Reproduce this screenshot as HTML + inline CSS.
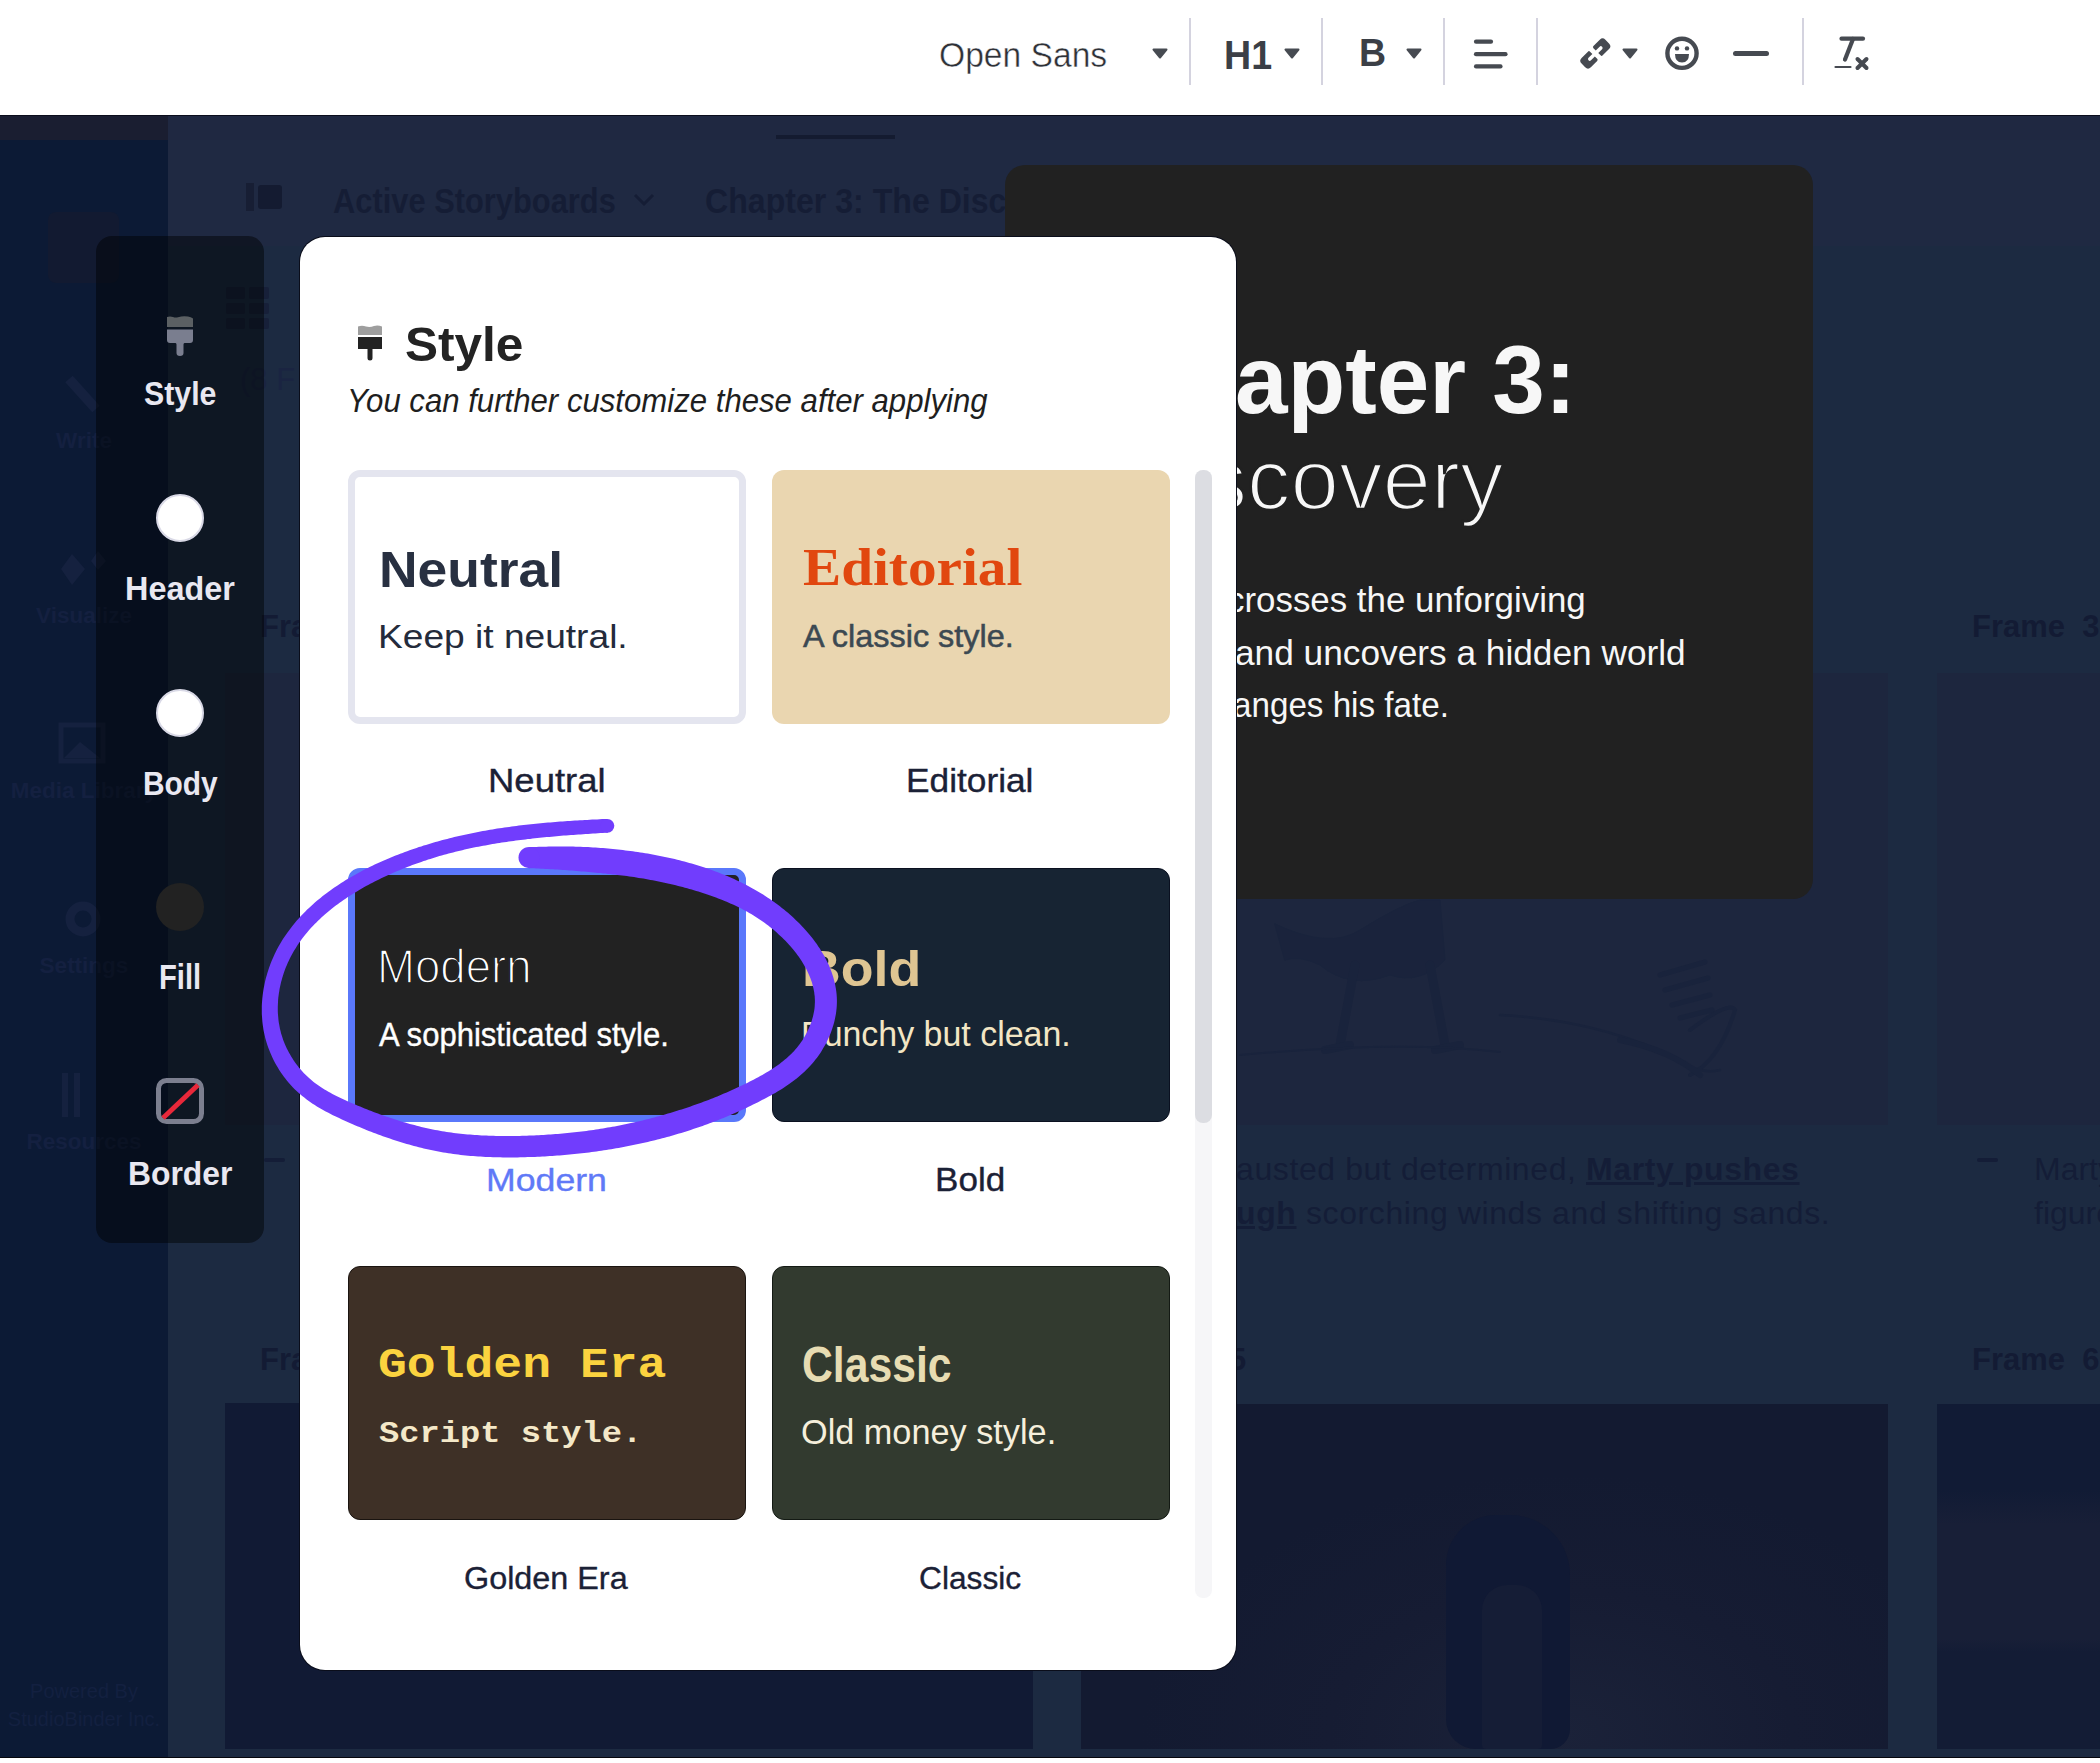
<!DOCTYPE html>
<html><head><meta charset="utf-8">
<style>
*{margin:0;padding:0;box-sizing:border-box}
html,body{width:2100px;height:1763px;overflow:hidden;background:#1c2a41;font-family:"Liberation Sans",sans-serif}
.a{position:absolute}
.t{position:absolute;white-space:nowrap;line-height:1;transform-origin:0 0}
.sep{position:absolute;top:18px;width:2px;height:67px;background:#d4d3df}
.car{position:absolute}
</style></head><body>
<div class="a" style="left:0;top:116px;width:2100px;height:1647px;background:#1c2a41"></div>
<div class="a" style="left:168px;top:116px;width:1932px;height:130px;background:#1f2942"></div>
<div class="a" style="left:0;top:116px;width:168px;height:1647px;background:#0c1a35"></div>
<div class="a" style="left:0;top:116px;width:168px;height:24px;background:#1a1e31"></div>
<div class="a" style="left:168px;top:116px;width:1932px;height:24px;background:#1f2841"></div>
<div class="a" style="left:776px;top:135px;width:119px;height:4px;background:#141b30"></div>
<div class="t" style="left:333.10px;top:183.50px;font-family:'Liberation Sans',sans-serif;font-size:34.25px;transform:scaleX(0.9006);font-weight:bold;color:#151d35;">Active Storyboards</div>
<svg class="a" style="left:632px;top:192px" width="24" height="16"><path d="M3 3 L12 12 L21 3" stroke="#151d35" stroke-width="3" fill="none"/></svg>
<div class="t" style="left:705.06px;top:183.50px;font-family:'Liberation Sans',sans-serif;font-size:34.25px;transform:scaleX(0.9373);font-weight:bold;color:#151d35;">Chapter 3: The Disc</div>
<div class="a" style="left:258px;top:185px;width:24px;height:24px;background:#141b31;border-radius:3px"></div>
<div class="a" style="left:246px;top:183px;width:8px;height:28px;background:#171e34"></div>
<div class="a" style="left:48px;top:212px;width:71px;height:71px;background:#121a31;border-radius:8px"></div>
<div class="a" style="left:226.0px;top:287.3px;width:18.6px;height:11.3px;background:#172039;border-radius:2px"></div>
<div class="a" style="left:249.3px;top:287.3px;width:19.3px;height:11.3px;background:#172039;border-radius:2px"></div>
<div class="a" style="left:226.0px;top:302.7px;width:18.6px;height:11.3px;background:#172039;border-radius:2px"></div>
<div class="a" style="left:249.3px;top:302.7px;width:19.3px;height:11.3px;background:#172039;border-radius:2px"></div>
<div class="a" style="left:226.0px;top:318.1px;width:18.6px;height:11.3px;background:#172039;border-radius:2px"></div>
<div class="a" style="left:249.3px;top:318.1px;width:19.3px;height:11.3px;background:#172039;border-radius:2px"></div>
<div class="t" style="left:240px;top:364px;font-size:31px;color:#1a2441">(8 F</div>
<div class="t" style="left:0;width:168px;text-align:center;top:430.4px;font-size:22.5px;font-weight:bold;color:#142040">Write</div>
<div class="t" style="left:0;width:168px;text-align:center;top:605.0px;font-size:22.5px;font-weight:bold;color:#142040">Visualize</div>
<div class="t" style="left:0;width:168px;text-align:center;top:780.0px;font-size:22.5px;font-weight:bold;color:#142040">Media Library</div>
<div class="t" style="left:0;width:168px;text-align:center;top:955.3px;font-size:22.5px;font-weight:bold;color:#142040">Settings</div>
<div class="t" style="left:0;width:168px;text-align:center;top:1130.8px;font-size:22.5px;font-weight:bold;color:#142040">Resources</div>
<svg class="a" style="left:60px;top:372px" width="44" height="44"><line x1="9" y1="7" x2="36" y2="37" stroke="#15213f" stroke-width="10"/></svg>
<svg class="a" style="left:58px;top:548px" width="52" height="42"><path d="M3 21 L14 6 L27 21 L14 37 Z" fill="#15213f"/><path d="M33 13 L40 3 L48 13 L40 22 Z" fill="#15213f"/></svg>
<svg class="a" style="left:58px;top:722px" width="48" height="42"><rect x="3" y="3" width="42" height="36" fill="none" stroke="#15213f" stroke-width="5"/><path d="M6 36 L22 20 L42 36 Z" fill="#15213f"/></svg>
<svg class="a" style="left:64px;top:900px" width="38" height="38"><circle cx="19" cy="19" r="13" fill="none" stroke="#15213f" stroke-width="9"/></svg>
<svg class="a" style="left:60px;top:1072px" width="44" height="46"><rect x="2" y="1" width="6" height="44" fill="#15213f"/><rect x="14" y="1" width="6" height="44" fill="#15213f"/></svg>
<div class="t" style="left:0;width:168px;text-align:center;top:1681px;font-size:20px;color:#132040">Powered By</div>
<div class="t" style="left:0;width:168px;text-align:center;top:1709px;font-size:20px;color:#132040">StudioBinder Inc.</div>
<div class="t" style="left:260px;top:611px;font-size:31px;font-weight:bold;color:#131b34">Fra</div>
<div class="t" style="left:260px;top:1344px;font-size:31px;font-weight:bold;color:#131b34">Fra</div>
<div class="t" style="left:1972px;top:611px;font-size:31px;font-weight:bold;color:#131b34">Frame&nbsp; 3</div>
<div class="t" style="left:1972px;top:1344px;font-size:31px;font-weight:bold;color:#131b34">Frame&nbsp; 6</div>
<div class="t" style="left:1229px;top:1344px;font-size:31px;font-weight:bold;color:#131b34">5</div>
<div class="a" style="left:225px;top:673px;width:808px;height:452px;background:#1d263e"></div>
<div class="a" style="left:1081px;top:673px;width:807px;height:452px;background:#1d263e"></div>
<div class="a" style="left:1937px;top:673px;width:163px;height:452px;background:#1d263e"></div>
<div class="a" style="left:225px;top:1403px;width:808px;height:346px;background:#111a34"></div>
<svg class="a" style="left:1081px;top:673px" width="807" height="452" viewBox="1081 673 807 452">
<g fill="#19233c" stroke="#19233c" stroke-linecap="round" fill-opacity="0.75">
<path d="M1275 924 Q1330 950 1360 930 Q1400 905 1420 900 L1440 900 L1445 960 Q1420 985 1390 975 Q1350 990 1320 965 Q1300 955 1285 960 Z"/>
<path d="M1355 965 L1340 1045 M1430 965 L1445 1045" stroke-width="9" fill="none"/>
<path d="M1325 1050 L1350 1045 M1435 1050 L1460 1045" stroke-width="8" fill="none"/>
<path d="M1240 1055 Q1400 1040 1500 1052" stroke-width="2" fill="none"/>
<path d="M1500 1015 Q1600 1020 1680 1060 Q1700 1075 1720 1070" stroke-width="2.5" fill="none"/>
<path d="M1660 975 L1705 962 M1665 990 L1708 978 M1672 1005 L1710 995 M1680 1018 L1712 1010" stroke-width="5" fill="none"/>
<path d="M1690 1030 Q1730 1000 1735 1010 Q1720 1060 1690 1075" stroke-width="4" fill="none"/>
<path d="M1620 1040 Q1670 1050 1700 1075" stroke-width="6" fill="none"/>
</g></svg>
<div class="a" style="left:1081px;top:1404px;width:807px;height:345px;background:radial-gradient(ellipse 420px 260px at 480px 330px,#1b2239 0%,#161c33 55%,#131a31 100%)"></div>
<div class="a" style="left:1446px;top:1515px;width:124px;height:234px;background:#101934;border-radius:50px 60px 20px 30px"></div>
<div class="a" style="left:1482px;top:1585px;width:60px;height:164px;background:#151d36;border-radius:25px 25px 4px 4px"></div>
<div class="a" style="left:1937px;top:1404px;width:163px;height:345px;background:linear-gradient(#111b35 0%,#111b35 25%,#181f37 35%,#181f37 68%,#131c35 72%)"></div>
<div class="t" style="left:1236px;top:1153px;font-size:32px;color:#141d37;letter-spacing:0.6px">austed but determined, <b style="text-decoration:underline">Marty pushes </b></div>
<div class="t" style="left:1236px;top:1197px;font-size:32px;color:#141d37;letter-spacing:0.6px"><b style="text-decoration:underline">ugh</b> scorching winds and shifting sands.</div>
<div class="t" style="left:2034px;top:1153px;font-size:32px;color:#141d37">Marty</div>
<div class="t" style="left:2034px;top:1197px;font-size:32px;color:#141d37">figure</div>
<div class="a" style="left:1977px;top:1158px;width:21px;height:4px;background:#141d37;border-radius:2px"></div>
<div class="a" style="left:264px;top:1158px;width:21px;height:4px;background:#141d37;border-radius:2px"></div>
<div class="a" style="left:1005px;top:165px;width:808px;height:734px;background:#212121;border-radius:20px"></div>
<div class="t" style="left:1235.07px;top:332.30px;font-family:'Liberation Sans',sans-serif;font-size:96.86px;transform:scaleX(0.9751);font-weight:bold;color:#f7f7f7;"><span style="position:absolute;right:100%">Ch</span>apter 3:</div>
<div class="t" style="left:1246.88px;top:437.60px;font-family:'Liberation Sans',sans-serif;font-size:84.44px;transform:scaleX(1.0311);;color:#f7f7f7;font-weight:normal;-webkit-text-stroke:2.5px #212121"><span style="position:absolute;right:100%">Dis</span>covery</div>
<div class="t" style="left:1227.04px;top:583.00px;font-family:'Liberation Sans',sans-serif;font-size:35.62px;transform:scaleX(0.9796);;color:#f7f7f7;"><span style="position:absolute;right:100%">Marty </span>crosses the unforgiving</div>
<div class="t" style="left:1235.00px;top:634.50px;font-family:'Liberation Sans',sans-serif;font-size:35.21px;transform:scaleX(1.0013);;color:#f7f7f7;"><span style="position:absolute;right:100%">desert </span>and uncovers a hidden world</div>
<div class="t" style="left:1233.07px;top:688.00px;font-family:'Liberation Sans',sans-serif;font-size:34.38px;transform:scaleX(0.9656);;color:#f7f7f7;"><span style="position:absolute;right:100%">that ch</span>anges his fate.</div>
<div class="a" style="left:96px;top:236px;width:168px;height:1007px;background:rgba(1,2,3,0.47);border-radius:16px"></div>
<svg class="a" style="left:166px;top:315px" width="28" height="42" viewBox="0 0 28 42">
<path d="M1 2 Q4 1 7 2 Q9.5 3 12 2.2 Q17 0.5 22 1.5 Q25 2 27 3.5 L27 12 L1 12 Z" fill="#5b6063"/>
<path d="M1 14.5 L27 14.5 L27 25 Q27 28 24 28 L18.5 28 Q17.5 28 17.5 29.5 L17.5 38 Q17.5 41 14 41 Q10.5 41 10.5 38 L10.5 29.5 Q10.5 28 9.5 28 L4 28 Q1 28 1 25 Z" fill="#7a7e8f"/>
</svg>
<div class="t" style="left:143.77px;top:378.00px;font-family:'Liberation Sans',sans-serif;font-size:32.47px;transform:scaleX(0.9333);font-weight:bold;color:#e9e8f1;">Style</div>
<div class="a" style="left:156px;top:494px;width:48px;height:48px;border-radius:50%;background:#fff;border:2px solid #d9d9e6"></div>
<div class="t" style="left:125.01px;top:572.70px;font-family:'Liberation Sans',sans-serif;font-size:32.47px;transform:scaleX(0.9972);font-weight:bold;color:#e9e8f1;">Header</div>
<div class="a" style="left:156px;top:689px;width:48px;height:48px;border-radius:50%;background:#fff;border:2px solid #d9d9e6"></div>
<div class="t" style="left:143.18px;top:767.70px;font-family:'Liberation Sans',sans-serif;font-size:32.88px;transform:scaleX(0.9087);font-weight:bold;color:#e9e8f1;">Body</div>
<div class="a" style="left:156px;top:883px;width:48px;height:48px;border-radius:50%;background:#222222"></div>
<div class="t" style="left:159.30px;top:960.30px;font-family:'Liberation Sans',sans-serif;font-size:34.25px;transform:scaleX(0.8511);font-weight:bold;color:#e9e8f1;">Fill</div>
<svg class="a" style="left:155px;top:1077px" width="50" height="48" viewBox="0 0 50 48">
<rect x="3.5" y="3.5" width="43" height="41" rx="8" fill="none" stroke="#7c7f8f" stroke-width="5"/>
<line x1="8" y1="41" x2="43" y2="8" stroke="#e8283a" stroke-width="5"/>
</svg>
<div class="t" style="left:128.06px;top:1157.70px;font-family:'Liberation Sans',sans-serif;font-size:32.88px;transform:scaleX(0.9686);font-weight:bold;color:#e9e8f1;">Border</div>
<div class="a" style="left:299px;top:236px;width:938px;height:1435px;background:#0a0d1a;border-radius:26px"></div>
<div class="a" style="left:300px;top:237px;width:936px;height:1433px;background:#fff;border-radius:25px"></div>
<svg class="a" style="left:357px;top:325px" width="26" height="36" viewBox="0 0 26 36">
<path d="M1 1.5 Q5 0 9 1.5 Q13 2.5 17 1 Q21 0 25 1.5 L25 10 L1 10 Z" fill="#9e9e9e"/>
<path d="M1 12 L25 12 L25 24 L15.5 24 L15.5 33 Q15.5 35.5 13 35.5 Q10.5 35.5 10.5 33 L10.5 24 L1 24 Z" fill="#222"/>
</svg>
<div class="t" style="left:404.65px;top:320.00px;font-family:'Liberation Sans',sans-serif;font-size:48.36px;transform:scaleX(1.0241);font-weight:bold;color:#232323;">Style</div>
<div class="t" style="left:347.15px;top:384.60px;font-family:'Liberation Sans',sans-serif;font-size:32.33px;transform:scaleX(0.9634);font-style:italic;color:#1e1e20;">You can further customize these after applying</div>
<div class="a" style="left:348px;top:470px;width:398px;height:254px;background:#fff;border-radius:12px;border:7px solid #e4e5ef"></div>
<div class="a" style="left:772px;top:470px;width:398px;height:254px;background:#ead6b0;border-radius:12px;"></div>
<div class="a" style="left:348px;top:868px;width:398px;height:254px;background:#222222;border-radius:12px;border:7px solid #5a78fb"></div>
<div class="a" style="left:772px;top:868px;width:398px;height:254px;background:#172433;border-radius:12px;border:1px solid #0a1020"></div>
<div class="a" style="left:348px;top:1266px;width:398px;height:254px;background:#3e3026;border-radius:12px;border:1px solid #1a1410"></div>
<div class="a" style="left:772px;top:1266px;width:398px;height:254px;background:#323a2f;border-radius:12px;border:1px solid #141a14"></div>
<div class="t" style="left:379.48px;top:545.70px;font-family:'Liberation Sans',sans-serif;font-size:49.73px;transform:scaleX(1.0745);font-weight:bold;color:#283041;">Neutral</div>
<div class="t" style="left:378.41px;top:620.00px;font-family:'Liberation Sans',sans-serif;font-size:33.84px;transform:scaleX(1.0973);;color:#242b3b;">Keep it neutral.</div>
<div class="t" style="left:802.92px;top:540.70px;font-family:'Liberation Serif',serif;font-size:52.75px;transform:scaleX(1.0845);font-weight:bold;color:#e1470f;">Editorial</div>
<div class="t" style="left:802.90px;top:620.90px;font-family:'Liberation Sans',sans-serif;font-size:31.37px;transform:scaleX(1.0338);;color:#3c4952;-webkit-text-stroke:0.5px #3c4952">A classic style.</div>
<div class="t" style="left:376.75px;top:943.10px;font-family:'Liberation Sans',sans-serif;font-size:47.4px;transform:scaleX(0.9617);;color:#ffffff;-webkit-text-stroke:1.6px #222222">Modern</div>
<div class="t" style="left:378.90px;top:1017.90px;font-family:'Liberation Sans',sans-serif;font-size:33.42px;transform:scaleX(0.9291);;color:#ffffff;-webkit-text-stroke:0.4px #ffffff">A sophisticated style.</div>
<div class="t" style="left:801.59px;top:943.80px;font-family:'Liberation Sans',sans-serif;font-size:50.14px;transform:scaleX(1.0714);font-weight:bold;color:#dfc592;">Bold</div>
<div class="t" style="left:801.04px;top:1016.90px;font-family:'Liberation Sans',sans-serif;font-size:34.38px;transform:scaleX(0.9869);;color:#f3e6c4;">Punchy but clean.</div>
<div class="t" style="left:377.74px;top:1345.20px;font-family:'Liberation Mono',monospace;font-size:42.47px;transform:scaleX(1.1317);font-weight:bold;color:#fbd33f;">Golden Era</div>
<div class="t" style="left:378.89px;top:1418.50px;font-family:'Liberation Mono',monospace;font-size:30.41px;transform:scaleX(1.1100);font-weight:bold;color:#f4e8c8;">Script style.</div>
<div class="t" style="left:802.31px;top:1340.40px;font-family:'Liberation Sans',sans-serif;font-size:50.55px;transform:scaleX(0.8451);font-weight:bold;color:#e7dcb2;">Classic</div>
<div class="t" style="left:801.36px;top:1414.40px;font-family:'Liberation Sans',sans-serif;font-size:35.34px;transform:scaleX(0.9698);;color:#f6efdc;">Old money style.</div>
<div class="t" style="left:487.51px;top:765.20px;font-family:'Liberation Sans',sans-serif;font-size:32.33px;transform:scaleX(1.1293);;color:#1b2136;;-webkit-text-stroke:0.35px #1b2136">Neutral</div>
<div class="t" style="left:906.13px;top:765.20px;font-family:'Liberation Sans',sans-serif;font-size:32.33px;transform:scaleX(1.0911);;color:#1b2136;;-webkit-text-stroke:0.35px #1b2136">Editorial</div>
<div class="t" style="left:486.19px;top:1164.90px;font-family:'Liberation Sans',sans-serif;font-size:31.37px;transform:scaleX(1.1376);;color:#6079f7;;-webkit-text-stroke:0.35px #6079f7">Modern</div>
<div class="t" style="left:935.28px;top:1163.90px;font-family:'Liberation Sans',sans-serif;font-size:32.74px;transform:scaleX(1.0717);;color:#1b2136;;-webkit-text-stroke:0.35px #1b2136">Bold</div>
<div class="t" style="left:463.98px;top:1561.80px;font-family:'Liberation Sans',sans-serif;font-size:32.05px;transform:scaleX(1.0094);;color:#1b2136;;-webkit-text-stroke:0.35px #1b2136">Golden Era</div>
<div class="t" style="left:919.32px;top:1561.80px;font-family:'Liberation Sans',sans-serif;font-size:32.05px;transform:scaleX(0.9890);;color:#1b2136;;-webkit-text-stroke:0.35px #1b2136">Classic</div>
<div class="a" style="left:1195px;top:470px;width:17px;height:1128px;background:#f6f6f8;border-radius:8px"></div>
<div class="a" style="left:1195px;top:470px;width:17px;height:653px;background:#dcdde2;border-radius:8px"></div>
<svg class="a" style="left:0;top:0" width="2100" height="1763"><g fill="#713dfd"><path d="M607.1,818.9 L604.6,819.0 L602.1,819.1 L599.6,819.3 L597.1,819.4 L594.7,819.5 L592.2,819.6 L589.7,819.8 L587.2,819.9 L584.8,820.0 L582.3,820.2 L579.8,820.3 L577.4,820.5 L574.9,820.6 L572.4,820.8 L570.0,820.9 L567.5,821.1 L565.1,821.2 L562.6,821.4 L560.2,821.6 L557.7,821.8 L555.3,822.0 L552.8,822.2 L550.4,822.4 L548.0,822.6 L545.5,822.8 L543.1,823.0 L540.7,823.2 L538.2,823.5 L535.8,823.7 L533.4,824.0 L530.9,824.2 L528.5,824.5 L526.1,824.7 L523.7,825.0 L521.3,825.3 L518.8,825.6 L516.4,825.9 L514.0,826.2 L511.6,826.5 L509.2,826.9 L506.8,827.2 L504.4,827.6 L502.0,827.9 L499.6,828.3 L497.2,828.6 L494.8,829.0 L492.4,829.4 L490.0,829.8 L487.6,830.2 L485.2,830.7 L482.8,831.1 L480.4,831.5 L478.1,832.0 L475.7,832.5 L473.3,832.9 L470.9,833.4 L468.5,833.9 L466.1,834.4 L463.8,834.9 L461.4,835.5 L459.0,836.0 L456.7,836.6 L454.3,837.1 L451.9,837.7 L449.6,838.3 L447.2,838.9 L444.8,839.5 L442.5,840.1 L440.1,840.8 L437.7,841.4 L435.4,842.1 L433.0,842.8 L430.7,843.5 L428.3,844.2 L426.0,844.9 L423.6,845.6 L421.3,846.4 L418.9,847.1 L416.6,847.9 L414.2,848.7 L411.9,849.5 L409.6,850.3 L407.2,851.2 L404.9,852.0 L402.6,852.9 L400.2,853.8 L397.9,854.7 L395.6,855.6 L393.2,856.5 L390.9,857.5 L388.6,858.5 L386.2,859.4 L383.9,860.4 L381.6,861.5 L379.3,862.5 L377.0,863.6 L374.7,864.6 L372.4,865.7 L370.1,866.8 L367.8,868.0 L365.5,869.1 L363.2,870.3 L361.0,871.5 L358.7,872.7 L356.5,873.9 L354.3,875.2 L352.0,876.4 L349.8,877.7 L347.6,879.0 L345.4,880.3 L343.3,881.7 L341.1,883.1 L339.0,884.5 L336.8,885.9 L334.7,887.3 L332.6,888.7 L330.6,890.2 L328.5,891.7 L326.5,893.2 L324.4,894.8 L322.4,896.3 L320.5,897.9 L318.5,899.5 L316.6,901.1 L314.6,902.8 L312.8,904.5 L310.9,906.2 L309.0,907.9 L307.2,909.6 L305.4,911.4 L303.6,913.2 L301.9,915.0 L300.2,916.8 L298.5,918.7 L296.8,920.6 L295.2,922.5 L293.6,924.4 L292.0,926.4 L290.5,928.4 L289.0,930.4 L287.5,932.4 L286.1,934.5 L284.7,936.5 L283.3,938.6 L281.9,940.8 L280.6,942.9 L279.4,945.1 L278.1,947.3 L276.9,949.6 L275.8,951.8 L274.7,954.1 L273.6,956.4 L272.6,958.7 L271.6,961.1 L270.6,963.5 L269.7,965.9 L268.9,968.3 L268.1,970.7 L267.3,973.2 L266.6,975.7 L265.9,978.1 L265.3,980.6 L264.7,983.2 L264.2,985.7 L263.7,988.2 L263.3,990.8 L262.9,993.4 L262.6,995.9 L262.3,998.5 L262.1,1001.1 L261.9,1003.7 L261.8,1006.3 L261.8,1008.9 L261.8,1011.5 L261.8,1014.1 L262.0,1016.8 L262.2,1019.4 L262.4,1022.0 L262.7,1024.6 L263.1,1027.2 L263.5,1029.9 L264.0,1032.5 L264.6,1035.1 L265.2,1037.7 L265.9,1040.3 L266.7,1042.9 L267.5,1045.4 L268.4,1048.0 L269.4,1050.5 L270.4,1053.0 L271.5,1055.5 L272.6,1058.0 L273.8,1060.4 L275.1,1062.9 L276.4,1065.2 L277.8,1067.6 L279.2,1069.9 L280.7,1072.2 L282.3,1074.4 L283.9,1076.7 L285.5,1078.8 L287.2,1080.9 L288.9,1083.0 L290.7,1085.0 L292.5,1087.0 L294.4,1088.9 L296.3,1090.8 L298.2,1092.6 L300.2,1094.3 L302.2,1096.0 L304.3,1097.6 L306.3,1099.2 L308.4,1100.7 L310.5,1102.2 L312.6,1103.7 L314.8,1105.1 L316.9,1106.4 L319.1,1107.7 L321.3,1109.0 L323.5,1110.2 L325.7,1111.4 L327.9,1112.6 L330.2,1113.8 L332.4,1114.9 L334.6,1116.0 L336.9,1117.1 L339.1,1118.1 L341.4,1119.2 L343.6,1120.2 L345.9,1121.2 L348.1,1122.2 L350.4,1123.2 L352.7,1124.2 L354.9,1125.2 L357.2,1126.2 L359.5,1127.1 L361.8,1128.1 L364.1,1129.0 L366.4,1130.0 L368.8,1130.9 L371.1,1131.8 L373.4,1132.7 L375.8,1133.6 L378.1,1134.5 L380.5,1135.3 L382.8,1136.2 L385.2,1137.0 L387.5,1137.8 L389.9,1138.6 L392.3,1139.4 L394.7,1140.2 L397.1,1141.0 L399.5,1141.7 L401.9,1142.5 L404.3,1143.2 L406.7,1143.9 L409.1,1144.6 L411.5,1145.2 L413.9,1145.9 L416.4,1146.5 L418.8,1147.2 L421.2,1147.8 L423.7,1148.4 L426.1,1148.9 L428.6,1149.5 L431.0,1150.0 L433.5,1150.6 L435.9,1151.1 L438.4,1151.5 L440.9,1152.0 L443.3,1152.4 L445.8,1152.8 L448.3,1153.2 L450.8,1153.6 L453.3,1154.0 L455.7,1154.3 L458.2,1154.6 L460.7,1154.9 L463.2,1155.2 L465.7,1155.5 L468.1,1155.7 L470.6,1155.9 L473.1,1156.1 L475.6,1156.3 L478.1,1156.5 L480.5,1156.6 L483.0,1156.8 L485.5,1156.9 L488.0,1157.0 L490.5,1157.1 L492.9,1157.2 L495.4,1157.2 L497.9,1157.3 L500.3,1157.3 L502.8,1157.4 L505.3,1157.4 L507.7,1157.4 L510.2,1157.4 L512.7,1157.4 L515.1,1157.4 L517.6,1157.4 L520.1,1157.3 L522.6,1157.3 L525.0,1157.2 L527.5,1157.1 L530.0,1157.1 L532.4,1157.0 L534.9,1156.9 L537.4,1156.8 L539.8,1156.7 L542.3,1156.5 L544.8,1156.4 L547.2,1156.3 L549.7,1156.1 L552.2,1156.0 L554.7,1155.8 L557.1,1155.6 L559.6,1155.4 L562.1,1155.2 L564.5,1155.0 L567.0,1154.8 L569.5,1154.6 L571.9,1154.3 L574.4,1154.1 L576.9,1153.8 L579.3,1153.5 L581.8,1153.3 L584.2,1153.0 L586.7,1152.7 L589.2,1152.4 L591.6,1152.1 L594.1,1151.7 L596.5,1151.4 L599.0,1151.0 L601.4,1150.7 L603.9,1150.3 L606.3,1149.9 L608.8,1149.6 L611.2,1149.2 L613.7,1148.7 L616.1,1148.3 L618.6,1147.9 L621.0,1147.5 L623.5,1147.0 L625.9,1146.5 L628.3,1146.1 L630.8,1145.6 L633.2,1145.1 L635.6,1144.6 L638.1,1144.1 L640.5,1143.6 L642.9,1143.0 L645.3,1142.5 L647.8,1141.9 L650.2,1141.3 L652.6,1140.8 L655.0,1140.2 L657.4,1139.6 L659.8,1139.0 L662.2,1138.3 L664.6,1137.7 L667.0,1137.1 L669.4,1136.4 L671.8,1135.7 L674.2,1135.0 L676.6,1134.3 L679.0,1133.6 L681.3,1132.9 L683.7,1132.2 L686.1,1131.4 L688.4,1130.7 L690.8,1129.9 L693.2,1129.1 L695.5,1128.3 L697.9,1127.5 L700.2,1126.7 L702.6,1125.9 L704.9,1125.1 L707.3,1124.2 L709.6,1123.3 L711.9,1122.5 L714.2,1121.6 L716.6,1120.7 L718.9,1119.8 L721.2,1118.8 L723.5,1117.9 L725.8,1116.9 L728.1,1116.0 L730.4,1115.0 L732.7,1114.0 L735.0,1113.0 L737.2,1112.0 L739.5,1111.0 L741.8,1110.0 L744.0,1108.9 L746.3,1107.9 L748.6,1106.8 L750.8,1105.7 L753.1,1104.6 L755.3,1103.5 L757.5,1102.4 L759.8,1101.3 L762.0,1100.1 L764.2,1099.0 L766.5,1097.8 L768.7,1096.6 L770.9,1095.4 L773.1,1094.1 L775.3,1092.9 L777.5,1091.6 L779.7,1090.2 L781.9,1088.9 L784.1,1087.5 L786.2,1086.1 L788.4,1084.6 L790.5,1083.1 L792.6,1081.6 L794.6,1080.0 L796.7,1078.4 L798.7,1076.7 L800.7,1075.0 L802.7,1073.3 L804.7,1071.5 L806.6,1069.6 L808.4,1067.7 L810.3,1065.8 L812.1,1063.8 L813.8,1061.7 L815.5,1059.6 L817.2,1057.4 L818.8,1055.2 L820.4,1052.9 L821.9,1050.5 L823.3,1048.1 L824.7,1045.7 L826.1,1043.2 L827.3,1040.7 L828.5,1038.1 L829.7,1035.6 L830.7,1032.9 L831.7,1030.3 L832.6,1027.6 L833.4,1024.9 L834.2,1022.2 L834.8,1019.4 L835.4,1016.6 L835.9,1013.9 L836.3,1011.0 L836.6,1008.2 L836.8,1005.4 L836.9,1002.6 L836.9,999.8 L836.8,997.0 L836.6,994.2 L836.3,991.5 L835.9,988.8 L835.4,986.0 L834.9,983.4 L834.2,980.7 L833.5,978.1 L832.7,975.5 L831.9,972.9 L830.9,970.3 L829.9,967.8 L828.9,965.3 L827.7,962.8 L826.5,960.4 L825.3,958.0 L824.0,955.6 L822.6,953.2 L821.2,950.9 L819.8,948.6 L818.3,946.4 L816.8,944.1 L815.2,941.9 L813.6,939.8 L811.9,937.6 L810.2,935.5 L808.5,933.5 L806.8,931.4 L805.0,929.4 L803.2,927.4 L801.3,925.5 L799.5,923.6 L797.6,921.7 L795.7,919.9 L793.8,918.1 L791.9,916.3 L789.9,914.5 L788.0,912.8 L786.0,911.2 L784.0,909.5 L781.9,907.9 L779.9,906.3 L777.9,904.8 L775.8,903.2 L773.7,901.7 L771.6,900.3 L769.5,898.8 L767.4,897.4 L765.2,896.0 L763.1,894.6 L760.9,893.3 L758.7,892.0 L756.6,890.7 L754.4,889.4 L752.1,888.2 L749.9,887.0 L747.7,885.8 L745.5,884.6 L743.2,883.5 L740.9,882.3 L738.7,881.2 L736.4,880.2 L734.1,879.1 L731.8,878.1 L729.5,877.1 L727.2,876.1 L724.8,875.1 L722.5,874.2 L720.2,873.2 L717.8,872.3 L715.5,871.4 L713.1,870.6 L710.8,869.7 L708.4,868.9 L706.0,868.1 L703.7,867.3 L701.3,866.5 L698.9,865.7 L696.5,865.0 L694.1,864.2 L691.7,863.5 L689.3,862.9 L686.9,862.2 L684.4,861.5 L682.0,860.9 L679.6,860.3 L677.2,859.7 L674.7,859.1 L672.3,858.5 L669.8,858.0 L667.4,857.4 L664.9,856.9 L662.5,856.4 L660.0,855.9 L657.5,855.4 L655.1,854.9 L652.6,854.5 L650.1,854.1 L647.7,853.6 L645.2,853.2 L642.7,852.8 L640.3,852.4 L637.8,852.0 L635.3,851.7 L632.8,851.3 L630.3,851.0 L627.8,850.7 L625.4,850.4 L622.9,850.1 L620.4,849.8 L617.9,849.5 L615.4,849.2 L612.9,849.0 L610.4,848.7 L608.0,848.5 L605.5,848.3 L603.0,848.1 L600.5,847.9 L598.0,847.7 L595.5,847.5 L593.0,847.4 L590.5,847.2 L588.1,847.1 L585.6,847.0 L583.1,846.9 L580.6,846.8 L578.1,846.7 L575.7,846.7 L573.2,846.6 L570.7,846.6 L568.2,846.6 L565.8,846.6 L563.3,846.5 L560.8,846.5 L558.4,846.6 L555.9,846.6 L553.5,846.6 L551.0,846.6 L548.6,846.6 L546.1,846.7 L543.7,846.7 L541.3,846.8 L538.8,846.8 L536.4,846.9 L534.0,846.9 L531.6,847.0 L529.1,847.0 L529.1,868.2 L531.4,868.2 L533.8,868.3 L536.2,868.4 L538.6,868.5 L541.0,868.7 L543.3,868.8 L545.7,868.9 L548.1,869.0 L550.5,869.2 L552.9,869.3 L555.3,869.4 L557.7,869.6 L560.1,869.8 L562.5,869.9 L564.9,870.1 L567.3,870.3 L569.7,870.5 L572.0,870.6 L574.4,870.8 L576.8,871.0 L579.2,871.2 L581.6,871.4 L584.0,871.6 L586.4,871.8 L588.8,872.0 L591.2,872.2 L593.6,872.5 L596.0,872.7 L598.4,872.9 L600.8,873.1 L603.2,873.4 L605.5,873.6 L607.9,873.9 L610.3,874.1 L612.7,874.4 L615.1,874.6 L617.5,874.9 L619.8,875.2 L622.2,875.5 L624.6,875.8 L626.9,876.1 L629.3,876.4 L631.7,876.8 L634.0,877.1 L636.4,877.5 L638.7,877.9 L641.1,878.2 L643.4,878.6 L645.8,879.0 L648.1,879.4 L650.5,879.9 L652.8,880.3 L655.1,880.8 L657.4,881.2 L659.8,881.7 L662.1,882.2 L664.4,882.7 L666.7,883.2 L669.0,883.7 L671.3,884.2 L673.6,884.8 L675.8,885.3 L678.1,885.9 L680.4,886.5 L682.7,887.1 L684.9,887.7 L687.2,888.3 L689.4,888.9 L691.7,889.6 L693.9,890.2 L696.2,890.9 L698.4,891.6 L700.6,892.3 L702.8,893.0 L705.1,893.7 L707.3,894.5 L709.5,895.2 L711.6,896.0 L713.8,896.8 L716.0,897.6 L718.2,898.4 L720.3,899.2 L722.4,900.1 L724.6,901.0 L726.7,901.8 L728.8,902.8 L730.9,903.7 L733.0,904.6 L735.1,905.6 L737.1,906.6 L739.2,907.6 L741.2,908.6 L743.3,909.7 L745.3,910.7 L747.3,911.8 L749.2,913.0 L751.2,914.1 L753.2,915.3 L755.1,916.5 L757.0,917.7 L758.9,918.9 L760.8,920.2 L762.7,921.5 L764.5,922.8 L766.4,924.2 L768.2,925.5 L770.0,926.9 L771.8,928.4 L773.6,929.8 L775.3,931.3 L777.0,932.8 L778.7,934.4 L780.4,935.9 L782.1,937.5 L783.8,939.2 L785.4,940.8 L787.0,942.5 L788.6,944.2 L790.2,946.0 L791.7,947.7 L793.2,949.5 L794.6,951.3 L796.0,953.1 L797.4,955.0 L798.8,956.8 L800.1,958.7 L801.3,960.6 L802.5,962.5 L803.7,964.4 L804.8,966.4 L805.9,968.3 L806.9,970.3 L807.8,972.2 L808.7,974.2 L809.6,976.2 L810.4,978.2 L811.1,980.2 L811.8,982.1 L812.4,984.2 L812.9,986.2 L813.4,988.2 L813.8,990.2 L814.2,992.2 L814.4,994.2 L814.7,996.2 L814.8,998.2 L814.9,1000.2 L814.9,1002.3 L814.8,1004.3 L814.7,1006.3 L814.5,1008.4 L814.2,1010.4 L813.8,1012.5 L813.4,1014.6 L812.9,1016.7 L812.3,1018.8 L811.7,1020.9 L811.0,1022.9 L810.2,1025.0 L809.4,1027.1 L808.5,1029.1 L807.5,1031.1 L806.5,1033.1 L805.5,1035.1 L804.4,1037.0 L803.2,1038.9 L802.1,1040.7 L800.8,1042.5 L799.6,1044.3 L798.2,1046.0 L796.9,1047.7 L795.5,1049.3 L794.1,1050.9 L792.6,1052.5 L791.1,1054.0 L789.5,1055.5 L787.9,1057.0 L786.3,1058.4 L784.6,1059.8 L782.9,1061.2 L781.2,1062.6 L779.5,1063.9 L777.7,1065.2 L775.8,1066.5 L774.0,1067.8 L772.1,1069.0 L770.2,1070.3 L768.2,1071.5 L766.3,1072.6 L764.3,1073.8 L762.3,1075.0 L760.2,1076.1 L758.2,1077.2 L756.1,1078.3 L754.0,1079.4 L751.9,1080.5 L749.8,1081.6 L747.7,1082.7 L745.5,1083.7 L743.4,1084.8 L741.2,1085.8 L739.1,1086.8 L736.9,1087.8 L734.8,1088.8 L732.6,1089.8 L730.4,1090.8 L728.3,1091.7 L726.1,1092.7 L723.9,1093.6 L721.7,1094.6 L719.5,1095.5 L717.3,1096.4 L715.1,1097.3 L712.9,1098.2 L710.7,1099.0 L708.5,1099.9 L706.3,1100.7 L704.0,1101.6 L701.8,1102.4 L699.6,1103.2 L697.3,1104.0 L695.1,1104.8 L692.9,1105.6 L690.6,1106.4 L688.4,1107.2 L686.1,1107.9 L683.8,1108.7 L681.6,1109.4 L679.3,1110.1 L677.1,1110.8 L674.8,1111.6 L672.5,1112.2 L670.2,1112.9 L667.9,1113.6 L665.7,1114.3 L663.4,1114.9 L661.1,1115.6 L658.8,1116.2 L656.5,1116.8 L654.2,1117.5 L651.9,1118.1 L649.6,1118.7 L647.3,1119.2 L645.0,1119.8 L642.6,1120.4 L640.3,1120.9 L638.0,1121.5 L635.7,1122.0 L633.4,1122.5 L631.0,1123.0 L628.7,1123.6 L626.4,1124.0 L624.0,1124.5 L621.7,1125.0 L619.4,1125.5 L617.0,1125.9 L614.7,1126.4 L612.3,1126.8 L610.0,1127.2 L607.6,1127.6 L605.3,1128.0 L602.9,1128.4 L600.5,1128.8 L598.2,1129.2 L595.8,1129.5 L593.5,1129.9 L591.1,1130.2 L588.7,1130.6 L586.4,1130.9 L584.0,1131.2 L581.6,1131.5 L579.3,1131.8 L576.9,1132.1 L574.5,1132.3 L572.1,1132.6 L569.8,1132.8 L567.4,1133.1 L565.0,1133.3 L562.6,1133.5 L560.2,1133.7 L557.9,1133.9 L555.5,1134.1 L553.1,1134.3 L550.7,1134.5 L548.3,1134.6 L545.9,1134.8 L543.6,1134.9 L541.2,1135.1 L538.8,1135.2 L536.4,1135.3 L534.0,1135.4 L531.6,1135.5 L529.2,1135.6 L526.8,1135.7 L524.5,1135.8 L522.1,1135.8 L519.7,1135.9 L517.3,1135.9 L514.9,1135.9 L512.5,1136.0 L510.1,1136.0 L507.8,1136.0 L505.4,1136.0 L503.0,1136.0 L500.6,1136.0 L498.2,1135.9 L495.9,1135.9 L493.5,1135.8 L491.1,1135.8 L488.8,1135.7 L486.4,1135.6 L484.1,1135.5 L481.7,1135.4 L479.3,1135.3 L477.0,1135.1 L474.7,1135.0 L472.3,1134.8 L470.0,1134.6 L467.6,1134.4 L465.3,1134.2 L463.0,1134.0 L460.6,1133.8 L458.3,1133.5 L456.0,1133.2 L453.7,1132.9 L451.3,1132.6 L449.0,1132.3 L446.7,1131.9 L444.4,1131.6 L442.1,1131.2 L439.8,1130.8 L437.5,1130.3 L435.1,1129.9 L432.8,1129.4 L430.5,1129.0 L428.2,1128.5 L425.9,1127.9 L423.6,1127.4 L421.3,1126.9 L419.0,1126.3 L416.7,1125.7 L414.4,1125.1 L412.1,1124.5 L409.8,1123.9 L407.5,1123.3 L405.2,1122.6 L402.9,1121.9 L400.6,1121.2 L398.4,1120.5 L396.1,1119.8 L393.8,1119.1 L391.5,1118.3 L389.3,1117.6 L387.0,1116.8 L384.7,1116.0 L382.5,1115.2 L380.2,1114.4 L378.0,1113.6 L375.7,1112.8 L373.5,1111.9 L371.3,1111.1 L369.0,1110.2 L366.8,1109.3 L364.6,1108.4 L362.4,1107.5 L360.1,1106.6 L357.9,1105.7 L355.7,1104.8 L353.5,1103.8 L351.4,1102.9 L349.2,1101.9 L347.0,1100.9 L344.9,1100.0 L342.7,1099.0 L340.6,1098.0 L338.5,1097.0 L336.4,1096.0 L334.4,1094.9 L332.4,1093.9 L330.4,1092.8 L328.4,1091.7 L326.4,1090.6 L324.5,1089.4 L322.6,1088.2 L320.7,1087.0 L318.9,1085.8 L317.1,1084.5 L315.3,1083.2 L313.6,1081.9 L311.9,1080.5 L310.2,1079.1 L308.5,1077.6 L306.9,1076.1 L305.3,1074.6 L303.7,1073.0 L302.2,1071.3 L300.7,1069.6 L299.2,1067.9 L297.8,1066.1 L296.4,1064.3 L295.1,1062.4 L293.7,1060.5 L292.5,1058.5 L291.2,1056.6 L290.1,1054.6 L288.9,1052.5 L287.9,1050.5 L286.8,1048.4 L285.8,1046.3 L284.9,1044.2 L284.0,1042.1 L283.2,1039.9 L282.5,1037.8 L281.8,1035.6 L281.1,1033.4 L280.6,1031.2 L280.0,1029.1 L279.6,1026.8 L279.2,1024.6 L278.8,1022.4 L278.5,1020.2 L278.3,1017.9 L278.1,1015.7 L277.9,1013.4 L277.8,1011.2 L277.8,1008.9 L277.8,1006.7 L277.9,1004.4 L278.0,1002.2 L278.1,999.9 L278.3,997.7 L278.6,995.4 L278.9,993.2 L279.3,990.9 L279.6,988.7 L280.1,986.5 L280.6,984.3 L281.1,982.0 L281.7,979.9 L282.3,977.7 L283.0,975.5 L283.7,973.3 L284.4,971.2 L285.2,969.1 L286.0,967.0 L286.9,964.9 L287.8,962.8 L288.8,960.8 L289.7,958.7 L290.7,956.7 L291.8,954.7 L292.9,952.8 L294.0,950.8 L295.2,948.9 L296.4,947.0 L297.6,945.1 L298.8,943.2 L300.1,941.4 L301.5,939.6 L302.8,937.8 L304.2,936.0 L305.6,934.2 L307.1,932.5 L308.5,930.7 L310.0,929.0 L311.6,927.3 L313.1,925.7 L314.7,924.0 L316.4,922.4 L318.0,920.8 L319.7,919.2 L321.4,917.6 L323.1,916.0 L324.8,914.5 L326.6,912.9 L328.4,911.4 L330.2,909.9 L332.0,908.5 L333.9,907.0 L335.8,905.6 L337.7,904.2 L339.6,902.8 L341.5,901.4 L343.5,900.0 L345.5,898.7 L347.5,897.3 L349.5,896.0 L351.5,894.7 L353.5,893.4 L355.6,892.2 L357.7,890.9 L359.7,889.7 L361.8,888.5 L363.9,887.3 L366.1,886.1 L368.2,885.0 L370.3,883.8 L372.5,882.7 L374.7,881.6 L376.8,880.5 L379.0,879.4 L381.2,878.3 L383.4,877.3 L385.6,876.3 L387.8,875.2 L390.0,874.2 L392.2,873.3 L394.5,872.3 L396.7,871.3 L398.9,870.4 L401.1,869.5 L403.4,868.6 L405.6,867.7 L407.9,866.8 L410.1,866.0 L412.3,865.1 L414.6,864.3 L416.8,863.5 L419.1,862.7 L421.3,861.9 L423.6,861.1 L425.8,860.4 L428.1,859.6 L430.4,858.9 L432.6,858.2 L434.9,857.5 L437.2,856.8 L439.4,856.1 L441.7,855.5 L444.0,854.8 L446.3,854.2 L448.6,853.6 L450.8,853.0 L453.1,852.4 L455.4,851.8 L457.7,851.3 L460.0,850.7 L462.3,850.2 L464.6,849.6 L466.9,849.1 L469.2,848.6 L471.5,848.1 L473.8,847.6 L476.2,847.1 L478.5,846.7 L480.8,846.2 L483.1,845.8 L485.4,845.4 L487.8,844.9 L490.1,844.5 L492.4,844.1 L494.8,843.7 L497.1,843.3 L499.4,843.0 L501.8,842.6 L504.1,842.3 L506.5,841.9 L508.8,841.6 L511.2,841.2 L513.5,840.9 L515.9,840.6 L518.3,840.3 L520.6,840.0 L523.0,839.7 L525.4,839.4 L527.8,839.1 L530.1,838.9 L532.5,838.6 L534.9,838.3 L537.3,838.1 L539.7,837.8 L542.1,837.6 L544.5,837.3 L546.8,837.1 L549.2,836.9 L551.7,836.7 L554.1,836.4 L556.5,836.2 L558.9,836.0 L561.3,835.8 L563.7,835.6 L566.1,835.4 L568.6,835.2 L571.0,835.1 L573.4,834.9 L575.8,834.7 L578.3,834.5 L580.7,834.4 L583.2,834.2 L585.6,834.0 L588.1,833.9 L590.5,833.7 L593.0,833.6 L595.4,833.4 L597.9,833.3 L600.3,833.1 L602.8,833.0 L605.3,832.8 L607.8,832.7Z"/><circle cx="607.4" cy="825.8" r="6.9"/><circle cx="529.1" cy="857.6" r="10.6"/></g></svg>
<div class="a" style="left:0;top:0;width:2100px;height:115px;background:#fff"></div>
<div class="a" style="left:0;top:115px;width:2100px;height:1px;background:#0b0d1c"></div>
<div class="t" style="left:939.09px;top:36.60px;font-family:'Liberation Sans',sans-serif;font-size:35.14px;transform:scaleX(0.9566);;color:#2e3137;-webkit-text-stroke:0.45px #ffffff">Open Sans</div>
<div class="t" style="left:1224.19px;top:35.60px;font-family:'Liberation Sans',sans-serif;font-size:40.14px;transform:scaleX(0.9362);font-weight:bold;color:#3b3f46;">H1</div>
<div class="t" style="left:1359.12px;top:33.00px;font-family:'Liberation Sans',sans-serif;font-size:39.13px;transform:scaleX(0.9583);font-weight:bold;color:#3b3f46;">B</div>
<svg class="a" style="left:1152px;top:48px" width="16" height="11" viewBox="0 0 16 11"><path d="M1.5 1.5 L14.5 1.5 L8 9.5 Z" fill="#474b52" stroke="#474b52" stroke-width="2" stroke-linejoin="round"/></svg>
<svg class="a" style="left:1284px;top:48px" width="16" height="11" viewBox="0 0 16 11"><path d="M1.5 1.5 L14.5 1.5 L8 9.5 Z" fill="#474b52" stroke="#474b52" stroke-width="2" stroke-linejoin="round"/></svg>
<svg class="a" style="left:1406px;top:48px" width="16" height="11" viewBox="0 0 16 11"><path d="M1.5 1.5 L14.5 1.5 L8 9.5 Z" fill="#474b52" stroke="#474b52" stroke-width="2" stroke-linejoin="round"/></svg>
<svg class="a" style="left:1622px;top:48px" width="16" height="11" viewBox="0 0 16 11"><path d="M1.5 1.5 L14.5 1.5 L8 9.5 Z" fill="#474b52" stroke="#474b52" stroke-width="2" stroke-linejoin="round"/></svg>
<div class="sep" style="left:1189px"></div>
<div class="sep" style="left:1321px"></div>
<div class="sep" style="left:1443px"></div>
<div class="sep" style="left:1536px"></div>
<div class="sep" style="left:1802px"></div>
<svg class="a" style="left:1470px;top:36px" width="42" height="36" viewBox="0 0 42 36">
<g stroke="#464a51" stroke-width="4.2" stroke-linecap="round"><line x1="6" y1="5.7" x2="21" y2="5.7"/><line x1="6" y1="18.2" x2="35.5" y2="18.2"/><line x1="6" y1="30.4" x2="30.5" y2="30.4"/></g></svg>
<svg class="a" style="left:1575px;top:33px" width="42" height="42" viewBox="0 0 42 42">
<g transform="translate(20.3 20.5) rotate(-45)" fill="#464a51">
<path d="M -2.4,-1.75 L -2.4,-5.05 Q -2.4,-6.55 -3.9,-6.55 L -12.85,-6.55 Q -16.85,-6.55 -16.85,-2.55 L -16.85,2.55 Q -16.85,6.55 -12.85,6.55 L -3.9,6.55 Q -2.4,6.55 -2.4,5.05 L -2.4,1.75 L -7.85,1.75 A 1.75 1.75 0 0 1 -7.85,-1.75 Z"/><path transform="scale(-1 1)" d="M -2.4,-1.75 L -2.4,-5.05 Q -2.4,-6.55 -3.9,-6.55 L -12.85,-6.55 Q -16.85,-6.55 -16.85,-2.55 L -16.85,2.55 Q -16.85,6.55 -12.85,6.55 L -3.9,6.55 Q -2.4,6.55 -2.4,5.05 L -2.4,1.75 L -7.85,1.75 A 1.75 1.75 0 0 1 -7.85,-1.75 Z"/>
</g></svg>
<svg class="a" style="left:1664px;top:35px" width="36" height="37" viewBox="0 0 36 37">
<circle cx="18" cy="18.3" r="14.6" fill="none" stroke="#464a51" stroke-width="4.4"/>
<circle cx="13" cy="13.4" r="2.2" fill="#464a51"/><circle cx="23" cy="13.4" r="2.2" fill="#464a51"/>
<path d="M11 19 L25 19 Q25 27.5 18 27.5 Q11 27.5 11 19 Z" fill="#464a51"/>
</svg>
<div class="a" style="left:1733px;top:51px;width:36px;height:5px;background:#464a51;border-radius:3px"></div>
<svg class="a" style="left:1832px;top:34px" width="40" height="40" viewBox="0 0 40 40">
<g stroke="#464a51" stroke-linecap="round" fill="none">
<line x1="9.5" y1="4.7" x2="31" y2="4.7" stroke-width="4.2"/>
<line x1="21" y1="5" x2="13" y2="25.5" stroke-width="4.2"/>
<line x1="3.5" y1="33" x2="18.5" y2="33" stroke-width="2.2"/>
<line x1="25.5" y1="25" x2="34.5" y2="34" stroke-width="4"/>
<line x1="34.5" y1="25" x2="25.5" y2="34" stroke-width="4"/>
</g></svg>
<div class="a" style="left:0;top:1757px;width:2100px;height:1px;background:#05060c"></div>
<div class="a" style="left:0;top:1758px;width:2100px;height:5px;background:#fff"></div>
</body></html>
